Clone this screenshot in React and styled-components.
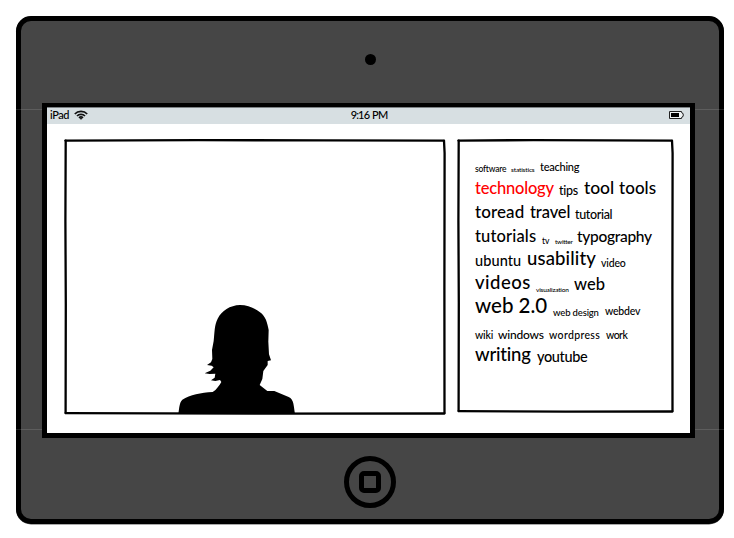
import React from 'react';
import styled, { createGlobalStyle } from 'styled-components';

const GlobalStyle = createGlobalStyle`
  * { box-sizing: border-box; }
  body {
    margin: 0;
    background: #fff;
    color: #000;
    font-family: Lato, "Open Sans", sans-serif;
    font-variant-ligatures: none;
  }
`;

const Page = styled.main`
  width: 734px;
  height: 538px;
  padding: 16px 10px 13px 16px;
  overflow: hidden;
`;

const Tablet = styled.section`
  position: relative;
  width: 708px;
  height: 508px;
  border: 5px solid #000;
  border-radius: 15px;
  background: #464646;
  box-shadow: 0 0.5px 0 #555;
  display: flex;
  flex-direction: column;
`;

const Seam = styled.span`
  position: absolute;
  left: -5px;
  right: -5px;
  top: ${(p) => p.$top}px;
  height: 1px;
  background: rgba(255, 255, 255, 0.13);
`;

const TopBezel = styled.div`
  height: 82px;
  padding-top: 33px;
  display: flex;
  justify-content: center;
`;

const Camera = styled.span`
  width: 11px;
  height: 11px;
  border-radius: 50%;
  background: #000;
`;

const Screen = styled.div`
  position: relative;
  width: 653px;
  height: 335px;
  margin-left: 21px;
  border: 5px solid #000;
  border-top-width: 4px;
  background: #fff;
`;

const StatusBar = styled.header`
  height: 17px;
  border-top: 1px solid #7d8285;
  background: #d7dfe2;
  display: grid;
  grid-template-columns: 1fr auto 1fr;
  align-items: start;
  padding: 0 6px 0 3px;
  font-size: 11px;
  line-height: 13px;
  font-weight: 500;
`;

const Carrier = styled.div`
  display: flex;
  align-items: center;
  gap: 5px;
  letter-spacing: -0.4px;
`;

const Clock = styled.time`
  letter-spacing: -0.85px;
  word-spacing: 1px;
  padding-left: 4px;
`;

const BatteryIcon = styled.svg`
  justify-self: end;
  display: block;
  margin-top: 3px;
`;

const Content = styled.div`
  display: flex;
  align-items: flex-start;
  gap: 12px;
  padding: 15px 0 0 18px;
`;

const Panel = styled.section`
  position: relative;
  width: ${(p) => p.$width}px;
  height: ${(p) => p.$height}px;
`;

const SketchFrame = styled.svg`
  position: absolute;
  inset: 0;
  overflow: visible;
  pointer-events: none;
`;

const Portrait = styled.div`
  height: 100%;
  display: flex;
  align-items: flex-end;
  padding-left: 113px;
`;

const Cloud = styled.div`
  padding: 14px 0 0 17px;
`;

const CloudRow = styled.div`
  height: ${(p) => p.$height}px;
  font-size: 16px;
  line-height: 25px;
  white-space: nowrap;
  display: flow-root;
`;

const Tag = styled.span`
  display: inline-block;
  width: ${(p) => p.$width}px;
  margin-left: ${(p) => p.$gap}px;
  font-size: ${(p) => p.$size}px;
  font-weight: 500;
  line-height: 1;
  letter-spacing: ${(p) => p.$track}px;
  vertical-align: ${(p) => p.$rise}px;
  color: ${(p) => (p.$active ? '#f00' : '#000')};
`;

const BottomBezel = styled.div`
  display: flex;
  justify-content: center;
  padding-top: 17.5px;
`;

const HomeButton = styled.div`
  width: 52px;
  height: 52px;
  border: 5px solid #000;
  border-radius: 50%;
  display: flex;
  align-items: center;
  justify-content: center;
`;

const HomeGlyph = styled.span`
  width: 22px;
  height: 22px;
  margin-left: -1px;
  border: 5px solid #000;
  border-radius: 5px;
`;

// label, left gap, width, font size, tracking, baseline rise
const rows = [
  [22, [['software', 0, 31, 8.5, -0.2, 0], ['statistics', 5, 24, 6.5, -0.15, 0], ['teaching', 5, 39, 11, -0.25, 1]]],
  [24, [['technology', 0, 79, 16.5, -0.2, 0], ['tips', 5, 20, 12.5, -0.25, -1], ['tool', 5, 30, 17.5, -0.1, 0], ['tools', 5, 38, 17, 0.05, 0]]],
  [24, [['toread', 0, 50, 17, 0.1, 0], ['travel', 5, 40, 16.5, -0.1, 0], ['tutorial', 5, 38, 12.5, -0.35, -1]]],
  [24, [['tutorials', 0, 61, 16.5, 0.15, 0], ['tv', 6, 7, 8.5, -0.1, -2], ['twitter', 6, 17, 6.5, -0.3, -2], ['typography', 5, 75, 15.5, -0.3, 0]]],
  [24, [['ubuntu', 0, 47, 14.5, 0.1, 0], ['usability', 5, 69, 18.5, 0.15, 1], ['video', 5, 25, 10.5, -0.15, -1]]],
  [24, [['videos', 0, 56, 18.5, 0.5, 1], ['visualization', 5, 33, 6.5, -0.2, -2], ['web', 5, 31, 16.5, 0, 0]]],
  [25, [['web 2.0', 0, 73, 20.5, 0, 1], ['web design', 5, 46, 9.5, -0.15, -2], ['webdev', 6, 35, 10.5, -0.2, -1]]],
  [23, [['wiki', 0, 18, 10.5, -0.2, 0], ['windows', 5, 46, 12, -0.2, 0], ['wordpress', 5, 52, 10.5, 0.35, 0], ['work', 5, 21, 10.5, -0.55, 0]]],
  [24, [['writing', 0, 56, 18.5, -0.2, 1], ['youtube', 6, 50, 14.5, -0.35, 0]]],
];

function Wifi() {
  return (
    <svg width="14" height="10" viewBox="0 0 14 10" fill="none" stroke="#111" strokeWidth="1.7">
      <path d="M.8 4C4 .6 10 .6 13.2 4M3 6c2.1-2.2 5.9-2.2 8 0M5 7.8c1.1-1.1 2.9-1.1 4 0" />
      <path d="M5.7 8h2.6L7 9.9z" fill="#111" stroke="none" />
    </svg>
  );
}

function Battery() {
  return (
    <BatteryIcon width="15" height="8" viewBox="0 0 15 8">
      <path d="M.5.5h12l.4 1.5 1.3.7v2.6l-1.3.7-.4 1.5H.5z" fill="#eef2f3" stroke="#222" />
      <path d="M2 2h8v4H2z" fill="#000" />
    </BatteryIcon>
  );
}

function Silhouette() {
  return (
    <svg width="117" height="109" viewBox="54 45 351 327">
      <path d="M240 45C263 45 284 54 300 67C317 79 322 98 326 120L325 155L327 193L333 211L323 213L323 225L310 243L307 267L299 285L322 303L343 303L386 321C402 328 401 348 405 372H55C58 354 58 337 67 329C90 314 123 308 158 306C170 299 178 286 184 276L180 270L166 273L153 271L164 263L166 251L149 252L134 250L151 242L161 232L155 227L141 225L153 217L157 207L156 180L161 153C164 127 163 105 173 86C185 62 210 46 240 45Z" />
    </svg>
  );
}

function Frame({ w, h }) {
  return (
    <SketchFrame width={w} height={h} viewBox={`0 0 ${w} ${h}`} fill="none" stroke="#000" strokeWidth="2.3" strokeLinejoin="round" strokeLinecap="round">
      <path d={`M.4 1.6L${w * 0.35} 1.1L${w * 0.68} 1.4L${w - 2} 1.7`} />
      <path d={`M${w - 2} 1.8L${w - 1.4} 14L${w - 1.6} ${h * 0.55}L${w - 1.5} ${h - 1}`} />
      <path d={`M${w - 1.6} ${h - 0.5}L${w * 0.5} ${h - 0.4}L.6 ${h - 0.9}`} />
      <path d={`M.6 ${h - 0.9}L.8 ${h * 0.6}L.4 ${h * 0.3}L.7 1.6`} />
    </SketchFrame>
  );
}

export default function App() {
  return (
    <Page>
      <GlobalStyle />
      <Tablet>
        <Seam $top={88} />
        <Seam $top={408} />
        <TopBezel><Camera /></TopBezel>
        <Screen>
          <StatusBar>
            <Carrier>iPad <Wifi /></Carrier>
            <Clock>9:16 PM</Clock>
            <Battery />
          </StatusBar>
          <Content>
            <Panel $width={381} $height={275}>
              <Portrait><Silhouette /></Portrait>
              <Frame w={381} h={275} />
            </Panel>
            <Panel $width={216} $height={273}>
              <Cloud>
                {rows.map(([height, tags]) => (
                  <CloudRow key={tags[0][0]} $height={height}>
                    {tags.map(([label, gap, width, size, track, rise]) => (
                      <Tag key={label} $gap={gap} $width={width} $size={size} $track={track} $rise={rise} $active={label === 'technology'}>
                        {label}
                      </Tag>
                    ))}
                  </CloudRow>
                ))}
              </Cloud>
              <Frame w={216} h={273} />
            </Panel>
          </Content>
        </Screen>
        <BottomBezel>
          <HomeButton><HomeGlyph /></HomeButton>
        </BottomBezel>
      </Tablet>
    </Page>
  );
}
